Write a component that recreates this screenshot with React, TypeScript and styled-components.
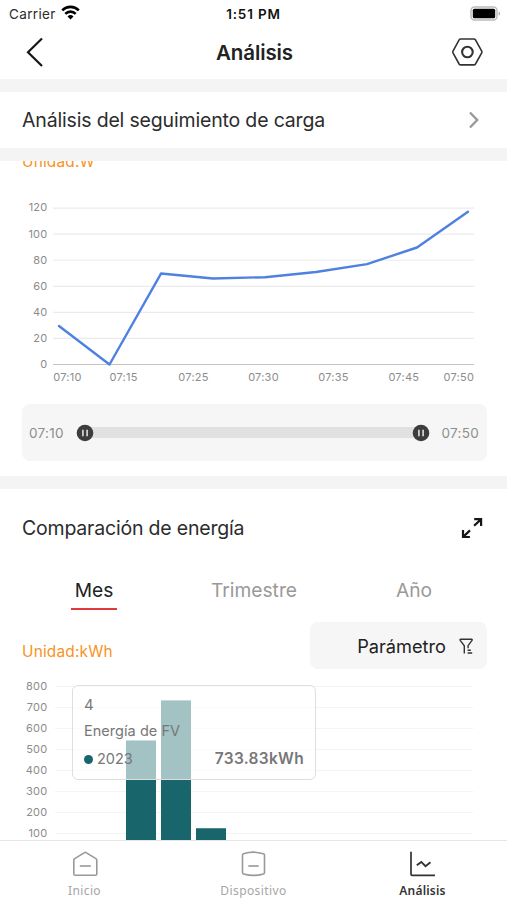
import styled, { createGlobalStyle } from 'styled-components';

interface Point {
  x: number;
  value: number;
}

interface Tick {
  x: number;
  label: string;
}

const powerPoints: Point[] = [
  { x: 59, value: 29.5 },
  { x: 109.5, value: 0 },
  { x: 161, value: 69.8 },
  { x: 213, value: 66 },
  { x: 265, value: 67 },
  { x: 316, value: 71 },
  { x: 367, value: 77 },
  { x: 417, value: 89.8 },
  { x: 468, value: 117.3 },
];

const powerTicks: Tick[] = [
  { x: 67.5, label: '07:10' },
  { x: 123.5, label: '07:15' },
  { x: 193.5, label: '07:25' },
  { x: 263.5, label: '07:30' },
  { x: 333.5, label: '07:35' },
  { x: 403.8, label: '07:45' },
  { x: 458.8, label: '07:50' },
];

const energyBars: Point[] = [
  { x: 126, value: 543 },
  { x: 161, value: 733.83 },
  { x: 196, value: 125 },
];

const tabs = ['Mes', 'Trimestre', 'Año'];

function App() {
  return (
    <Screen>
      <GlobalStyle />
      <StatusBar>
        <Carrier>
          Carrier
          <WifiIcon />
        </Carrier>
        <Clock>1:51 PM</Clock>
        <BatteryIcon />
      </StatusBar>
      <Header>
        <svg width="20" height="32" viewBox="0 0 20 32" fill="none">
          <path d="M17 2.5 3 16.2 17 30" stroke="#161616" strokeWidth="2.2" />
        </svg>
        <Title>Análisis</Title>
        <svg width="32" height="30" viewBox="0 0 32 30" fill="none">
          <path
            d="M9.7 2h13.2c.8 0 1.2.3 1.6.9l6.2 11.2c.3.6.3 1.1 0 1.7L24.5 27c-.4.6-.8.9-1.6.9H9.7c-.8 0-1.2-.3-1.6-.9L2 15.8c-.3-.6-.3-1.1 0-1.7L8.1 2.9C8.5 2.3 8.9 2 9.7 2Z"
            stroke="#333"
            strokeWidth="1.6"
          />
          <circle cx="16.4" cy="15" r="5.3" stroke="#333" strokeWidth="2.1" />
        </svg>
      </Header>
      <Divider />
      <LinkRow>
        <SectionTitle $spacing={-0.17}>Análisis del seguimiento de carga</SectionTitle>
        <svg width="12" height="18" viewBox="0 0 12 18" fill="none">
          <path d="m2 1.5 7.2 7.5L2 16.5" stroke="#999" strokeWidth="2.4" />
        </svg>
      </LinkRow>
      <Divider />
      <PowerSection>
        <ClippedUnit>
          <Unit>Unidad:W</Unit>
        </ClippedUnit>
        <PowerChart />
        <RangeBox>
          <RangeTime>07:10</RangeTime>
          <RangeTrack>
            <RangeHandle />
            <RangeHandle />
          </RangeTrack>
          <RangeTime>07:50</RangeTime>
        </RangeBox>
      </PowerSection>
      <Divider />
      <EnergySection>
        <SectionHead>
          <SectionTitle $spacing={-0.2}>Comparación de energía</SectionTitle>
          <svg width="22" height="22" viewBox="0 0 22 22" fill="none">
            <path
              d="M13.2 2.2h6.9v6.9M19.7 2.6l-6.6 6.2M2 13.1V20h6.9M2.4 19.6 9 13.4"
              stroke="#161616"
              strokeWidth="2.2"
            />
          </svg>
        </SectionHead>
        <Tabs>
          {tabs.map((tab, i) => (
            <Tab key={tab} $active={i === 0}>
              {tab}
            </Tab>
          ))}
        </Tabs>
        <FilterRow>
          <Unit>Unidad:kWh</Unit>
          <FilterButton>
            Parámetro
            <svg width="15" height="17" viewBox="0 0 15 17" fill="none" stroke="#333" strokeWidth="1.4">
              <path d="M5.3 15.5V7.7L1.2 2.4c-.4-.6-.2-1.1.5-1.1h10.8c.7 0 .9.5.5 1.1L9.1 7.7v2.6M8.6 12.3h3.2M8.6 15h4.6" />
            </svg>
          </FilterButton>
        </FilterRow>
        <ChartArea>
          <EnergyChart />
          <Tooltip>
            <TooltipTitle>4</TooltipTitle>
            <TooltipName>Energía de FV</TooltipName>
            <TooltipRow>
              <Dot />
              <span>2023</span>
              <strong>733.83kWh</strong>
            </TooltipRow>
          </Tooltip>
        </ChartArea>
      </EnergySection>
      <BottomNav>
        <NavItem>
          <svg width="28" height="26" viewBox="0 0 28 26" fill="none" stroke="#999" strokeWidth="1.6">
            <path d="M2.8 9.3c0-.8.3-1.3.9-1.7l9.8-6c.6-.4 1-.4 1.600 0l9.800 6c.6.4.9.9.9 1.7v13.600c0 .9-.4 1.300-1.300 1.300H4.100c-.9 0-1.300-.4-1.300-1.300Z" />
            <path d="M8.8 15h11" />
          </svg>
          Inicio
        </NavItem>
        <NavItem>
          <svg width="28" height="26" viewBox="0 0 28 26" fill="none" stroke="#999" strokeWidth="1.6">
            <path d="M2.5 4.100c0-.8.4-1.200 1.100-1.400 6.500-2 13.300-2 19.800 0 .7.2 1.100.6 1.100 1.400v17.400c0 .8-.4 1.200-1.100 1.400-6.500 2-13.300 2-19.800 0-.7-.2-1.100-.6-1.100-1.400Z" />
            <path d="M8.300 15h10.400" />
          </svg>
          Dispositivo
        </NavItem>
        <NavItem $active>
          <svg width="28" height="26" viewBox="0 0 28 26" fill="none" stroke="#333" strokeWidth="1.7">
            <path d="M2 .8v22.500c0 .7.3 1 1 1h23" />
            <path d="m7.800 14.200 4.500-3.300 4.200 4.300 5-4" strokeWidth="1.9" />
          </svg>
          Análisis
        </NavItem>
      </BottomNav>
    </Screen>
  );
}

const WifiIcon = () => (
  <svg width="19" height="15" viewBox="0 0 19 15" fill="none" stroke="#000" strokeWidth="2.6">
    <path d="M1.2 5.3a11.8 11.8 0 0 1 16.6 0" />
    <path d="M4.3 8.8a7.4 7.4 0 0 1 10.4 0" />
    <path d="M9.5 14.5 6.5 11.4a4.3 4.3 0 0 1 6 0Z" fill="#000" stroke="none" />
  </svg>
);

const BatteryIcon = () => (
  <svg width="31" height="15" viewBox="0 0 31 15">
    <rect x="1" y="1" width="26" height="13" rx="3.5" fill="#fff" stroke="#bbb" strokeWidth="1.5" />
    <rect x="2.8" y="2.8" width="22.4" height="9.4" rx="1.5" />
    <path d="M28.7 5.2c1.8.8 1.8 3.8 0 4.6Z" fill="#aaa" />
  </svg>
);

const PowerChart = () => {
  // 0 sits on y = 194.5, every 20 W is 26px tall
  const toY = (value: number) => 194.5 - value * 1.303;
  const line = powerPoints.map((p) => `${p.x},${toY(p.value)}`).join(' ');

  return (
    <Chart width="507" height="220" viewBox="0 0 507 220">
      {[120, 100, 80, 60, 40, 20, 0].map((value) => (
        <g key={value}>
          <path
            d={`M53 ${toY(value)}H474`}
            stroke={value === 0 ? '#c4c4c4' : '#ebebeb'}
            strokeWidth="1.2"
          />
          <text x="47.5" y={toY(value) + 3.3} textAnchor="end">
            {value}
          </text>
        </g>
      ))}
      {powerTicks.map((tick) => (
        <text key={tick.label} x={tick.x} y="211.4" textAnchor="middle">
          {tick.label}
        </text>
      ))}
      <polyline
        points={line}
        fill="none"
        stroke="#4f81e0"
        strokeWidth="2.4"
        strokeLinejoin="round"
        strokeLinecap="round"
      />
    </Chart>
  );
};

const EnergyChart = () => {
  const toY = (value: number) => 178.5 - value * 0.21;

  return (
    <Chart width="507" height="170" viewBox="0 0 507 170">
      {[800, 700, 600, 500, 400, 300, 200, 100].map((value) => (
        <g key={value}>
          <path d={`M55 ${toY(value)}H473`} stroke="#f4f4f4" strokeWidth="1.2" />
          <text x="47.5" y={toY(value) + 3.5} textAnchor="end">
            {value}
          </text>
        </g>
      ))}
      {energyBars.map((bar) => (
        <rect key={bar.x} x={bar.x} y={toY(bar.value)} width="30" height="200" fill="#18666b" />
      ))}
    </Chart>
  );
};

const RangeHandle = () => (
  <svg width="18" height="18" viewBox="0 0 18 18">
    <circle cx="9" cy="9" r="8.3" fill="#3d3d3d" />
    <path d="M6.9 5.8v6.4M11.1 5.8v6.4" stroke="#d5d5d5" strokeWidth="1.7" />
  </svg>
);

export default App;

const GlobalStyle = createGlobalStyle`
  * {
    box-sizing: border-box;
  }

  body {
    margin: 0;
    background: #fff;
    font-family: Inter, 'Liberation Sans', sans-serif;
  }

  svg {
    display: block;
    flex-shrink: 0;
  }
`;

const Screen = styled.main`
  display: flex;
  flex-direction: column;
  width: 507px;
  height: 900px;
  overflow: hidden;
  background: #fff;
  color: #2c2c2c;
`;

const StatusBar = styled.div`
  display: grid;
  grid-template-columns: 1fr auto 1fr;
  align-items: center;
  flex-shrink: 0;
  height: 28px;
  padding: 0 6px;
  font-size: 13.5px;

  & > svg {
    justify-self: end;
    margin-top: -2px;
  }
`;

const Carrier = styled.div`
  display: flex;
  align-items: center;
  gap: 5px;
  padding-left: 3px;
  letter-spacing: 0.35px;

  svg {
    margin-top: -3px;
  }
`;

const Clock = styled.div`
  color: #111;
  font-size: 13.5px;
  font-weight: 600;
  letter-spacing: 0.85px;
`;

const Header = styled.header`
  display: flex;
  align-items: center;
  justify-content: space-between;
  flex-shrink: 0;
  height: 51px;
  padding: 0 24px 3px 25px;
`;

const Title = styled.h1`
  margin: 0 0 0 13px;
  color: #222;
  font-size: 20.5px;
  font-weight: 600;
  letter-spacing: -0.1px;
`;

const Divider = styled.div`
  flex-shrink: 0;
  height: 13px;
  background: #f4f4f4;
`;

const LinkRow = styled.div`
  display: flex;
  align-items: center;
  justify-content: space-between;
  flex-shrink: 0;
  height: 56px;
  padding: 0 27px 0 22px;
`;

const SectionTitle = styled.h2<{ $spacing: number }>`
  margin: 0;
  font-size: 19.5px;
  font-weight: 400;
  letter-spacing: ${({ $spacing }) => $spacing}px;
  white-space: nowrap;
`;

const PowerSection = styled.section`
  flex-shrink: 0;
  height: 315px;
`;

// scrolled half way under the divider above
const ClippedUnit = styled.div`
  display: flex;
  align-items: flex-end;
  height: 9px;
  padding-left: 22px;
  overflow: hidden;

  & > div {
    margin-bottom: -2px;
  }
`;

const Unit = styled.div`
  color: #f7931e;
  font-size: 15.4px;
  line-height: 20px;
  letter-spacing: 0.2px;
`;

const Chart = styled.svg`
  text {
    fill: #8c8c8c;
    font-family: Inter, sans-serif;
    font-size: 11px;
    letter-spacing: 0.25px;
  }
`;

const RangeBox = styled.div`
  display: flex;
  align-items: center;
  justify-content: space-between;
  height: 57px;
  margin: 14px 20px 0 22px;
  padding: 0 8px 0 7px;
  border-radius: 8px;
  background: #f6f6f6;
`;

const RangeTime = styled.span`
  width: 36px;
  color: #8e8e8e;
  font-size: 13.5px;
  letter-spacing: 0.3px;

  &:last-child {
    width: 38px;
    text-align: right;
  }
`;

const RangeTrack = styled.div`
  display: flex;
  align-items: center;
  justify-content: space-between;
  width: 354px;
  height: 11px;
  background: linear-gradient(#e1e1e1, #e1e1e1) center / 336px 11px no-repeat;
`;

const EnergySection = styled.section`
  flex-shrink: 0;
  height: 351px;
  overflow: hidden;
`;

const SectionHead = styled.div`
  display: flex;
  align-items: center;
  justify-content: space-between;
  height: 78px;
  padding: 0 24px 0 22px;
`;

const Tabs = styled.div`
  display: grid;
  grid-template-columns: repeat(3, 160px);
  justify-content: center;
  height: 44px;
  padding-left: 1px;
`;

const Tab = styled.div<{ $active: boolean }>`
  justify-self: center;
  height: 43px;
  padding: 10px 4px 0;
  border-bottom: 2.5px solid ${({ $active }) => ($active ? '#e0393e' : 'transparent')};
  color: ${({ $active }) => ($active ? '#222' : '#999')};
  font-size: 19.2px;
  line-height: 26px;
`;

const FilterRow = styled.div`
  display: flex;
  align-items: center;
  justify-content: space-between;
  height: 47px;
  margin-top: 11px;
  padding: 0 20px 0 22px;

  ${Unit} {
    margin-top: 12px;
  }
`;

const FilterButton = styled.div`
  display: flex;
  align-items: center;
  justify-content: flex-end;
  gap: 13px;
  width: 177px;
  height: 47px;
  padding: 1px 13px 0 0;
  border-radius: 8px;
  background: #f6f6f6;
  color: #222;
  font-size: 18.2px;
`;

const ChartArea = styled.div`
  position: relative;
  margin-top: 7px;
`;

const Tooltip = styled.div`
  position: absolute;
  top: 9px;
  left: 72px;
  width: 244px;
  height: 95px;
  padding: 9px 11px;
  border: 1.5px solid #dedede;
  border-radius: 6px;
  background: rgba(255, 255, 255, 0.6);
  color: #777;
  font-size: 14.5px;
`;

const TooltipTitle = styled.div`
  font-size: 15px;
  line-height: 20px;
`;

const TooltipName = styled.div`
  margin-top: 6px;
  line-height: 20px;
  letter-spacing: 0.04px;
`;

const TooltipRow = styled.div`
  display: flex;
  align-items: center;
  margin-top: 8px;
  line-height: 20px;

  strong {
    margin-left: auto;
    font-size: 15.5px;
    font-weight: 600;
    letter-spacing: 0.3px;
  }
`;

const Dot = styled.i`
  width: 9px;
  height: 9px;
  margin-right: 4px;
  border-radius: 50%;
  background: #18666b;
`;

const BottomNav = styled.nav`
  display: grid;
  grid-template-columns: repeat(3, 1fr);
  flex-shrink: 0;
  height: 60px;
  border-top: 1px solid #e6e6e6;
  background: #fff;
`;

const NavItem = styled.div<{ $active?: boolean }>`
  display: flex;
  flex-direction: column;
  align-items: center;
  gap: 4px;
  padding-top: 10px;
  color: ${({ $active }) => ($active ? '#333' : '#a6a6a6')};
  font-family: 'Noto Sans', sans-serif;
  font-size: 12px;
  font-weight: ${({ $active }) => ($active ? 600 : 400)};
  line-height: 19px;
  letter-spacing: ${({ $active }) => ($active ? 0.2 : 0.4)}px;
`;
